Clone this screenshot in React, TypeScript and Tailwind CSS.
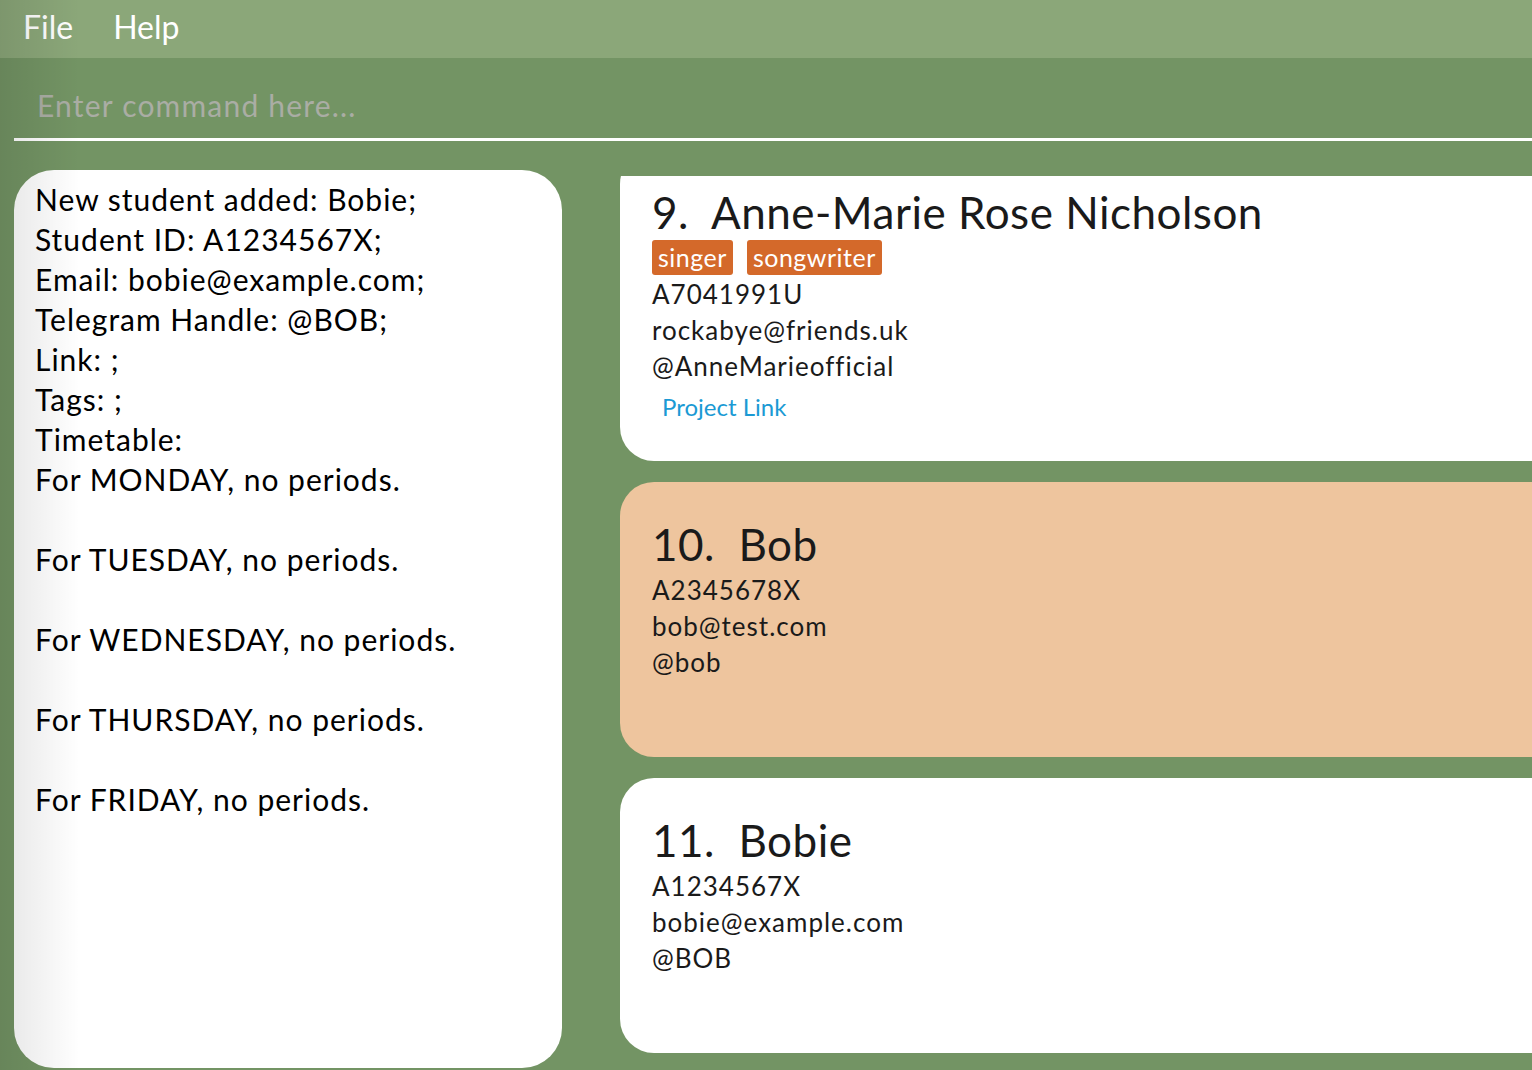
import React from "react";

const font = { fontFamily: "Lato, 'Open Sans', sans-serif" };

function Card({
  index,
  name,
  tags,
  id,
  email,
  handle,
  link,
  peach,
  tall,
}: {
  index: number;
  name: string;
  tags?: string[];
  id: string;
  email: string;
  handle: string;
  link?: string;
  peach?: boolean;
  tall?: boolean;
}) {
  return (
    <div
      className={`w-[1000px] shrink-0 rounded-l-[34px] pl-[32px] pt-[38px] text-[#1a1a1a] ${
        peach ? "bg-[#eec59e]" : "bg-white"
      } ${tall ? "h-[311px]" : "h-[275px]"}`}
    >
      <div className="text-[44px] leading-[48px] tracking-[0.5px]">
        {index}.&nbsp;&nbsp;{name}
      </div>
      <div className="mt-[4px] flex flex-col">
        {tags && (
          <div className="mb-[1px] flex h-[35px] gap-[14px]">
            {tags.map((t) => (
              <span
                key={t}
                className="flex h-[35px] items-center rounded-[3px] bg-[#d4692a] px-[6px] text-[25px] tracking-[0.5px] text-white"
              >
                {t}
              </span>
            ))}
          </div>
        )}
        <div className="text-[26px] leading-[36px] tracking-[1px]">{id}</div>
        <div className="text-[26px] leading-[36px] tracking-[1px]">{email}</div>
        <div className="text-[26px] leading-[36px] tracking-[1px]">{handle}</div>
        {link && (
          <div className="mt-[5px] pl-[10px] text-[24px] leading-[36px] text-[#1b9ad4]">
            {link}
          </div>
        )}
      </div>
    </div>
  );
}

export default function App() {
  const lines = [
    "New student added: Bobie;",
    "Student ID: A1234567X;",
    "Email: bobie@example.com;",
    "Telegram Handle: @BOB;",
    "Link: ;",
    "Tags: ;",
    "Timetable:",
    "For MONDAY, no periods.",
    "",
    "For TUESDAY, no periods.",
    "",
    "For WEDNESDAY, no periods.",
    "",
    "For THURSDAY, no periods.",
    "",
    "For FRIDAY, no periods.",
  ];
  return (
    <div
      className="relative flex h-[1070px] w-[1532px] flex-col overflow-hidden bg-[#739464]"
      style={font}
    >
      <div className="flex h-[58px] shrink-0 items-center gap-[40px] bg-[#8ba779] pb-[4px] pl-[23px] text-[32px] text-white">
        <span>File</span>
        <span>Help</span>
      </div>
      <div className="ml-[14px] mt-[22px] flex h-[61px] shrink-0 items-center border-b-[3px] border-white pb-[7px] pl-[23px] text-[30px] tracking-[1.2px] text-[#aaada4]">
        Enter command here...
      </div>
      <div className="mt-[29px] flex flex-1 gap-[58px] pl-[14px]">
        <div className="h-[898px] w-[548px] shrink-0 rounded-[40px] bg-white pl-[21px] pt-[9px] text-[30px] leading-[40px] tracking-[1px] text-black">
          {lines.map((l, i) => (
            <div key={i} className="h-[40px]">
              {l}
            </div>
          ))}
        </div>
        <div className="mt-[6px] flex-1 overflow-hidden">
          <div className="-mt-[26px] flex flex-col gap-[21px]">
            <Card
              index={9}
              name="Anne-Marie Rose Nicholson"
              tags={["singer", "songwriter"]}
              id="A7041991U"
              email="rockabye@friends.uk"
              handle="@AnneMarieofficial"
              link="Project Link"
              tall
            />
            <Card
              index={10}
              name="Bob"
              id="A2345678X"
              email="bob@test.com"
              handle="@bob"
              peach
            />
            <Card
              index={11}
              name="Bobie"
              id="A1234567X"
              email="bobie@example.com"
              handle="@BOB"
            />
          </div>
        </div>
      </div>
      <div className="pointer-events-none absolute left-0 top-0 h-full w-[80px] bg-gradient-to-r from-black/10 to-transparent" />
    </div>
  );
}
